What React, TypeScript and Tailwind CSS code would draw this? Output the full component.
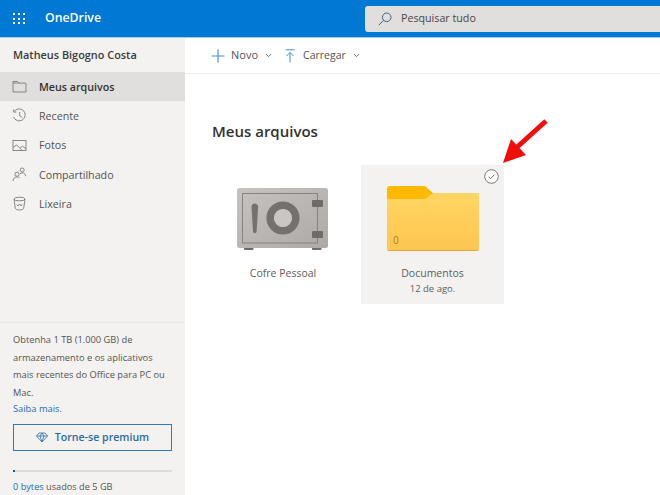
import { ChevronDown } from "lucide-react";

const font = { fontFamily: '"Open Sans", "Noto Sans", sans-serif' };

function FolderIcon() {
  return (
    <svg width="15" height="15" viewBox="0 0 15 15" fill="none" stroke="#7d7b79" strokeWidth="0.9">
      <path d="M1 2.5h4.5l1.5 1.6h7v8.9H1z" />
      <path d="M1 4.1h6" />
    </svg>
  );
}

function ClockIcon() {
  return (
    <svg width="15" height="15" viewBox="0 0 15 15" fill="none" stroke="#7d7b79" strokeWidth="0.9">
      <path d="M2.2 3.6A6 6 0 1 1 1.6 9" />
      <path d="M1.6 1.4v2.7h2.7" />
      <path d="M7.7 4v3.8l2.6 1.7" />
    </svg>
  );
}

function PhotoIcon() {
  return (
    <svg width="15" height="15" viewBox="0 0 15 15" fill="none" stroke="#7d7b79" strokeWidth="0.9">
      <rect x="1" y="2.5" width="13" height="10" />
      <path d="M1 9.5l3.6-2.6 5.6 5.6M8.2 10l2.3-1.8 3.5 2.6" />
    </svg>
  );
}

function PeopleIcon() {
  return (
    <svg width="15" height="15" viewBox="0 0 15 15" fill="none" stroke="#7d7b79" strokeWidth="0.9">
      <circle cx="5" cy="7.2" r="2.1" />
      <path d="M1 14c.2-2.6 1.6-4.1 4-4.1 1.1 0 2 .3 2.7 1" />
      <circle cx="10.2" cy="3" r="2" />
      <path d="M8 7c.6-.8 1.3-1.2 2.2-1.2 2 0 3.2 1.3 3.5 3.4" />
    </svg>
  );
}

function TrashIcon() {
  return (
    <svg width="15" height="15" viewBox="0 0 15 15" fill="none" stroke="#7d7b79" strokeWidth="0.9">
      <ellipse cx="7.5" cy="3" rx="5.5" ry="1.8" />
      <path d="M2 3.2l1.3 9c.2 1 2 1.8 4.2 1.8s4-.8 4.2-1.8l1.3-9" />
      <path d="M5 8.5l1 1.5 1.5-2 1.5 2 1-1.5" />
    </svg>
  );
}

function Safe() {
  return (
    <svg width="92" height="64" viewBox="0 0 92 64">
      <defs>
        <linearGradient id="safeBody" x1="0" y1="0" x2="1" y2="1">
          <stop offset="0" stopColor="#c6c3c0" />
          <stop offset="1" stopColor="#aca9a6" />
        </linearGradient>
      </defs>
      <rect x="7" y="58" width="9.5" height="4" rx="1" fill="#6f6c69" />
      <rect x="75" y="58" width="9.5" height="4" rx="1" fill="#6f6c69" />
      <rect x="0" y="0" width="91" height="60" rx="2.5" fill="url(#safeBody)" />
      <rect x="5.5" y="5.5" width="75" height="49.5" fill="none" stroke="#85827f" strokeWidth="1" />
      <rect x="75" y="12" width="11" height="7" rx="1" fill="#6e6b68" />
      <rect x="75" y="43" width="11" height="7" rx="1" fill="#6e6b68" />
      <path d="M14.5 19c0-2.2 1.300-3.500 3.300-3.500s3.300 1.300 3.300 3.500l-1.500 24.500c-.1 1-.8 1.500-1.800 1.500s-1.700-.5-1.800-1.500z" fill="#74716e" />
      <circle cx="46" cy="30" r="12.8" fill="none" stroke="#74716e" strokeWidth="7.5" />
      <circle cx="46" cy="30" r="9" fill="#c9c6c3" />
    </svg>
  );
}

function Folder() {
  return (
    <svg width="92" height="65" viewBox="0 0 92 65">
      <defs>
        <linearGradient id="folderFront" x1="0" y1="0" x2="0" y2="1">
          <stop offset="0" stopColor="#ffd662" />
          <stop offset="1" stopColor="#fdc650" />
        </linearGradient>
      </defs>
      <path d="M3 0h35l8 7h44a2 2 0 0 1 2 2v10H0V3a3 3 0 0 1 3-3z" fill="#ffb900" />
      <path d="M38 13l8-6h44a2 2 0 0 1 2 2v53a2 2 0 0 1-2 2H2a2 2 0 0 1-2-2V13z" fill="url(#folderFront)" />
      <path d="M0 62a2 2 0 0 0 2 2h88a2 2 0 0 0 2-2v1a2 2 0 0 1-2 2H2a2 2 0 0 1-2-2z" fill="#eaa63c" />
    </svg>
  );
}

const nav = [
  { label: "Meus arquivos", icon: <FolderIcon />, active: true },
  { label: "Recente", icon: <ClockIcon /> },
  { label: "Fotos", icon: <PhotoIcon /> },
  { label: "Compartilhado", icon: <PeopleIcon /> },
  { label: "Lixeira", icon: <TrashIcon /> },
];

export default function App() {
  return (
    <div className="relative flex h-[495px] w-[660px] flex-col overflow-hidden bg-white" style={font}>
      {/* barra superior */}
      <header className="flex h-[37px] shrink-0 items-center bg-[#0078d4]">
        <div className="ml-[13px] grid w-[13px] grid-cols-3 gap-[2.5px]">
          {Array.from({ length: 9 }).map((_, i) => (
            <span key={i} className="h-[2px] w-[2px] bg-white" />
          ))}
        </div>
        <span className="ml-[19px] w-[56px] whitespace-nowrap text-[12.3px] font-semibold text-white">OneDrive</span>
        <div className="ml-[264px] flex h-[26px] flex-1 items-center rounded-l-[3px] bg-[#e1dfdd]">
          <svg className="ml-[13px]" width="14" height="14" viewBox="0 0 14 14" fill="none" stroke="#3f5f80" strokeWidth="1">
            <circle cx="8.7" cy="5.3" r="4.3" />
            <path d="M5.5 8.3L0.8 13.2" />
          </svg>
          <span className="ml-[9px] text-[10.7px] text-[#484644]">Pesquisar tudo</span>
        </div>
      </header>
      <div className="h-px shrink-0 bg-[#9fd0f3]" />

      <div className="flex min-h-0 flex-1">
        {/* menu lateral */}
        <aside className="flex w-[185px] shrink-0 flex-col bg-[#f3f2f1]">
          <div className="flex h-[34px] items-center pl-[13px] text-[10.9px] font-semibold text-[#3b3a39]">
            Matheus Bigogno Costa
          </div>
          <nav className="flex flex-col">
            {nav.map((item) => (
              <div
                key={item.label}
                className={`flex h-[29.3px] items-center pl-[12px] text-[10.7px] ${
                  item.active ? "bg-[#e1dfdd] font-semibold text-[#323130]" : "text-[#55534f]"
                }`}
              >
                {item.icon}
                <span className="ml-[12px]">{item.label}</span>
              </div>
            ))}
          </nav>

          <div className="mt-auto border-t border-[#eceae8] px-[13px] pb-[1px] pt-[8px]">
            <p className="text-[9.3px] leading-[17.5px] text-[#55534f]">
              Obtenha 1 TB (1.000 GB) de armazenamento e os aplicativos mais recentes do Office para PC ou Mac.
            </p>
            <a className="block text-[9.3px] leading-[15px] text-[#1f6cab]">Saiba mais.</a>
            <button className="mt-[8px] flex h-[27px] w-[159px] items-center justify-center gap-[7px] border border-[#2f7ab8] text-[10.6px] font-semibold text-[#2c6a9e]">
              <svg width="12" height="11" viewBox="0 0 12 11" fill="none" stroke="#2c6a9e" strokeWidth="0.8">
                <path d="M3 1h6l2.5 3L6 10 .5 4zM.5 4h11M4 4l2 6 2-6-2-3z" />
              </svg>
              Torne-se premium
            </button>
            <div className="mt-[19px] h-[2px] w-[159px] bg-[#dddbd9]">
              <div className="h-[2px] w-[2px] bg-[#0f5c99]" />
            </div>
            <p className="mt-[7px] text-[9.2px] leading-[15px] text-[#55534f]">
              <span className="text-[#1f6cab]">0 bytes</span> usados de 5 GB
            </p>
          </div>
        </aside>

        {/* conteúdo */}
        <main className="min-w-0 flex-1">
          <div className="flex h-[36px] items-center border-b border-[#edebe9] pl-[26px] text-[11px] text-[#55534f]">
            <svg width="14" height="14" viewBox="0 0 14 14" stroke="#3f8fd2" strokeWidth="1.1">
              <path d="M7 0.5v13M0.5 7h13" />
            </svg>
            <span className="ml-[6px]">Novo</span>
            <ChevronDown className="ml-[6px] h-[9px] w-[9px] text-[#605e5c]" strokeWidth={2.5} />
            <svg className="ml-[11px]" width="12" height="14" viewBox="0 0 12 14" fill="none" stroke="#3f8fd2" strokeWidth="1">
              <path d="M1.5 0.8h9M6 13.5V3.5M2.5 7L6 3.5 9.5 7" />
            </svg>
            <span className="ml-[7px] text-[10.5px]">Carregar</span>
            <ChevronDown className="ml-[6px] h-[9px] w-[9px] text-[#605e5c]" strokeWidth={2.5} />
          </div>

          <h1 className="ml-[27px] mt-[45px] text-[15px] font-semibold leading-[24px] text-[#323130]">Meus arquivos</h1>

          <div className="ml-[26px] mt-[22px] flex gap-[6px]">
            <div className="flex h-[139px] w-[144px] flex-col items-center pt-[23px] text-[10.5px] text-[#605e5c]">
              <Safe />
              <span className="mt-[14px] leading-[15px]">Cofre Pessoal</span>
            </div>
            <div className="relative flex h-[139px] w-[143px] flex-col items-center bg-[#f3f2f1] pt-[21px] text-[10.5px] text-[#605e5c]">
              <Folder />
              <span className="absolute left-[32px] top-[68px] text-[10px] text-[#b5791a]">0</span>
              <span className="mt-[15px] leading-[15px]">Documentos</span>
              <span className="mt-[1px] text-[9.5px] leading-[14px]">12 de ago.</span>
              <svg className="absolute right-[5px] top-[4px]" width="15" height="15" viewBox="0 0 15 15" fill="white" stroke="#6b6967" strokeWidth="0.9">
                <circle cx="7.5" cy="7.5" r="6.8" />
                <path d="M4.6 7.8l2 1.8 3.7-3.9" fill="none" />
              </svg>
            </div>
          </div>
        </main>
      </div>

      {/* seta vermelha sobre a captura */}
      <svg className="absolute left-[500px] top-[116px]" width="50" height="50" viewBox="0 0 50 50">
        <path d="M46 5L15 33" stroke="#f20d0d" strokeWidth="5" />
        <path d="M3 47l8-24 15 16z" fill="#f20d0d" />
      </svg>
    </div>
  );
}
